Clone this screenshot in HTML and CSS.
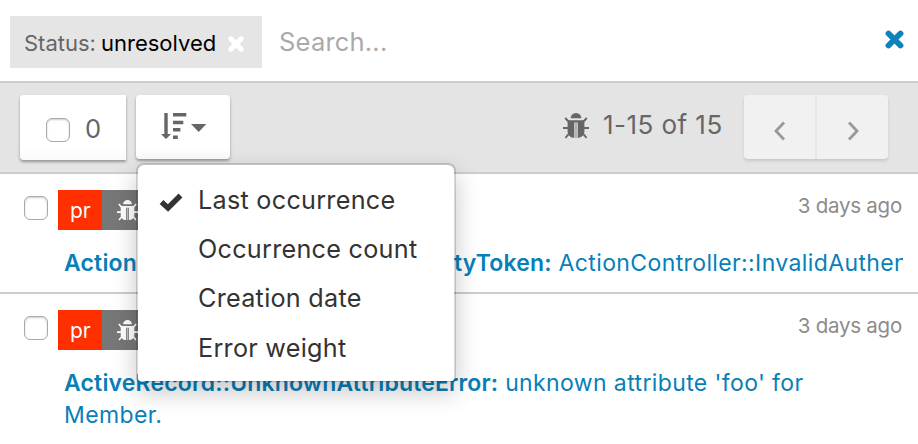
FILE: index.html
```html
<!DOCTYPE html>
<html lang="en">
<head>
<meta charset="utf-8">
<title>Errors</title>
<link rel="stylesheet" href="styles.css">
</head>
<body>
<svg class="defs" width="0" height="0" aria-hidden="true">
  <symbol id="bug" viewBox="0 0 26 26">
    <path d="M7.6 5.3a5.4 5.2 0 0 1 10.8 0z"/>
    <path d="M4.6 7.3h16.8v11.2c0 3.700-2.800 6.300-6.700 6.300V9.500h-3.400v15.300c-3.900 0-6.700-2.600-6.700-6.300z"/>
    <path d="M12.300 9.500h1.400v15.400h-1.400z" opacity=".55"/>
    <path d="M5.500 8.500 2.200 5M20.500 8.500 23.800 5M5 15H0M21 15h5M6 20.500l-3.500 4.300M20 20.500l3.500 4.300" fill="none" stroke="currentColor" stroke-width="1.900"/>
  </symbol>
  <symbol id="times" viewBox="0 0 20 20">
    <path d="M4.300 4.300l11.400 11.400M15.700 4.300L4.300 15.700" fill="none" stroke="currentColor" stroke-width="5.600" stroke-linecap="round"/>
  </symbol>
</svg>
<header class="search">
  <div class="filter"><span class="filter-key">Status:</span><span class="filter-value">unresolved</span><svg class="filter-remove"><use href="#times"/></svg></div>
  <span class="placeholder">Search...</span>
  <svg class="clear"><use href="#times"/></svg>
</header>
<div class="toolbar">
  <div class="button select-all"><span class="checkbox"></span><span class="count">0</span></div>
  <div class="button sort">
    <svg class="sort-icon" viewBox="0 0 46 28">
      <path d="M3.300 1h3.400v21H10L5 27 0 22h3.300z"/>
      <path d="M12 1h13.300v3.600H12zM12 8.700h10.300v3.600H12zM12 16h7.400v3.600H12zM12 23.400h4.800V27H12z"/>
      <path d="M30 12h15.300l-7.600 8z"/>
    </svg>
    <ul class="menu">
      <li class="item item-last"><svg class="check" viewBox="0 0 24 20"><path d="M2.500 10l6.500 6L21.500 3.500" fill="none" stroke="currentColor" stroke-width="5.400"/></svg><span>Last occurrence</span></li>
      <li class="item item-count"><span>Occurrence count</span></li>
      <li class="item item-date"><span>Creation date</span></li>
      <li class="item item-weight"><span>Error weight</span></li>
    </ul>
  </div>
  <svg class="bug-total"><use href="#bug"/></svg>
  <span class="range">1-15 of 15</span>
  <div class="pager">
    <span class="page"><svg viewBox="0 0 12 20"><path d="M10 1.500 2 10l8 8.500"/></svg></span>
    <span class="page"><svg viewBox="0 0 12 20"><path d="M2 1.500 10 10l-8 8.500"/></svg></span>
  </div>
</div>
<main>
  <article class="row">
    <div class="meta"><span class="checkbox"></span><span class="env">pr</span><span class="kind"><svg><use href="#bug"/></svg></span><time class="time">3 days ago</time></div>
    <p class="title title-clip"><b>ActionController::InvalidAuthenticityToken:</b> <span>ActionController::InvalidAuthenticityToken</span></p>
  </article>
  <article class="row">
    <div class="meta"><span class="checkbox"></span><span class="env">pr</span><span class="kind"><svg><use href="#bug"/></svg></span><time class="time">3 days ago</time></div>
    <p class="title"><b>ActiveRecord::UnknownAttributeError:</b> <span>unknown attribute 'foo' for<br>Member.</span></p>
  </article>
</main>
</body>
</html>
```
FILE: styles.css
```css
* { box-sizing: border-box; }
body { margin: 0; width: 918px; height: 444px; overflow: hidden; background: #fff; color: #666; font-family: Inter, "Liberation Sans", sans-serif; white-space: nowrap; }
svg { display: block; flex: none; fill: currentColor; }
.defs { position: absolute; }
.search { display: flex; align-items: center; height: 83px; padding: 0 13px 0 10px; border-bottom: 2px solid #ccc; }
.filter { display: flex; align-items: center; width: 252px; height: 52px; margin-top: 3px; padding: 1px 0 0 14px; background: #e5e5e5; font-size: 22px; }
.filter-key { width: 77px; }
.filter-value { width: 126px; color: #000; }
.filter-remove { width: 18px; height: 18px; margin-top: 2px; color: #fff; }
.placeholder { margin: 1px auto 0 17px; font-size: 25.500px; letter-spacing: .2px; color: #aaa; }
.clear { width: 21px; height: 21px; margin-top: -2px; color: #0d82bb; }
.toolbar { display: flex; align-items: flex-start; height: 91px; padding: 12px 30px 0 20px; background: #e4e4e4; border-bottom: 2px solid #ccc; }
.button { display: flex; align-items: center; height: 64px; background: linear-gradient(#fff 80%, #fafafa); border-radius: 4px; box-shadow: 0 2px 3px rgba(0,0,0,.35); color: #666; }
.checkbox { flex: none; width: 24px; height: 24px; border: 1.500px solid #aaa; border-radius: 6px; background: #fff; box-shadow: inset 0 1px 2px rgba(0,0,0,.2); }
.select-all { width: 106px; height: 65px; padding: 5px 0 0 26px; border-radius: 4px 0 0 4px; }
.count { margin: -3px 0 0 15px; font-size: 25.500px; }
.sort { position: relative; width: 94px; margin-left: 10px; padding-left: 25px; }
.sort-icon { width: 46px; height: 28px; margin-top: -2px; }
.menu { position: absolute; z-index: 2; top: 68px; left: 0; width: 320px; height: 219px; margin: 0; padding: 10px 0 0; list-style: none; background: #fff; background-clip: padding-box; border: 2px solid rgba(0,0,0,.15); border-bottom-width: 1px; border-radius: 8px 8px 4px 4px; box-shadow: 0 10px 24px rgba(0,0,0,.22); color: #333; font-size: 25.200px; letter-spacing: .27px; }
.item { display: flex; align-items: center; justify-content: flex-start; height: 49.300px; padding-left: 60px; }
.check { width: 24px; height: 20px; margin: 4px 15px 0 -39px; }
.bug-total { width: 26px; height: 26px; margin: 18px 0 0 333px; }
.range { width: 141px; margin-top: 14px; margin-left: 14px; font-size: 26px; letter-spacing: .45px; line-height: 31px; }
.pager { display: flex; width: 144px; height: 64px; border-radius: 4px; background: #f1f1f1; box-shadow: 0 2px 3px rgba(0,0,0,.13); }
.page { display: flex; flex: 1; align-items: center; justify-content: center; padding-top: 7px; color: #999; }
.page + .page { border-left: 2px solid #e7e7e7; }
.page svg { width: 12px; height: 20px; fill: none; stroke: currentColor; stroke-width: 2.800; }
.row { height: 120px; padding: 16px 15px 0 24px; border-bottom: 2px solid #ccc; }
.row:last-child { height: 150px; border: 0; }
.meta { display: flex; height: 40px; }
.meta .checkbox { margin-top: 6px; }
.env { width: 44px; margin-left: 10px; padding-left: 12px; background: #ff2f00; color: #fff; font-size: 21px; line-height: 42px; }
.kind { width: 60px; padding: 10px 0 0 15px; background: #777; color: #fff; }
.kind svg { width: 21px; height: 21px; }
.time { margin: 0 1px 0 auto; color: #8c8c8c; font-size: 20.500px; letter-spacing: -.25px; line-height: 32px; }
.title { margin: 17px 0 0 40px; color: #087fb9; font-size: 23px; letter-spacing: .38px; line-height: 32px; }
.title b { font-weight: 600; letter-spacing: .16px; }
.title-clip { overflow: hidden; }
```
